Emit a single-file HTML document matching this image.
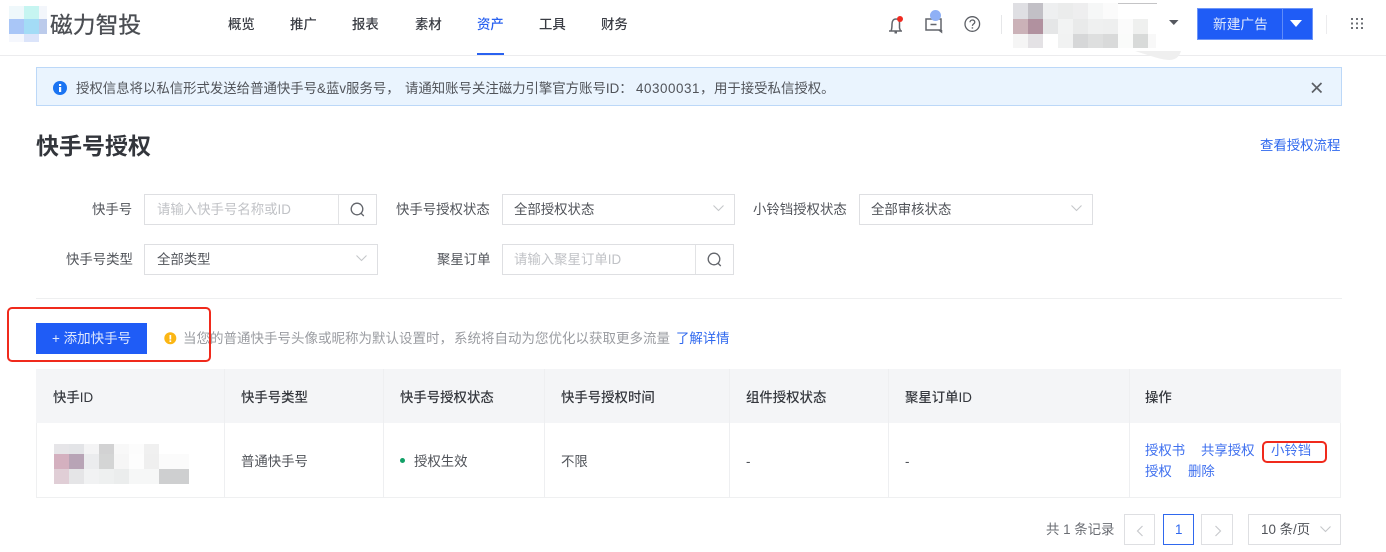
<!DOCTYPE html>
<html lang="zh"><head><meta charset="utf-8"><style>
html,body{margin:0;padding:0}
body{width:1386px;height:552px;background:#fff;position:relative;overflow:hidden;font-family:"Liberation Sans","Noto Sans CJK SC",sans-serif;font-size:13.4px;color:#505359;text-spacing-trim:space-all}
.t{position:absolute;white-space:nowrap;line-height:20px;margin-top:1px}
.b{position:absolute}
.nav{font-weight:500;color:#3a3d44}
.th{font-weight:500;color:#35383e}
.lk{color:#3f70ef}
.box{position:absolute;border:1px solid #dedfe2;box-sizing:border-box;background:#fff}
.ph{color:#c0c2c6}
svg{position:absolute;overflow:visible}
</style></head><body>
<!-- logo mosaic -->
<div class="b" style="left:9px;top:6px;width:15px;height:13px;background:#eff8fb"></div>
<div class="b" style="left:24px;top:6px;width:15px;height:13px;background:#c6f5f1"></div>
<div class="b" style="left:39px;top:6px;width:8px;height:13px;background:#f3f6fb"></div>
<div class="b" style="left:9px;top:19px;width:15px;height:15px;background:#a9c6f7"></div>
<div class="b" style="left:24px;top:19px;width:15px;height:15px;background:#a3dcf6"></div>
<div class="b" style="left:39px;top:19px;width:8px;height:15px;background:#bccbeb"></div>
<div class="b" style="left:9px;top:34px;width:15px;height:8px;background:#f5f7fd"></div>
<div class="b" style="left:24px;top:34px;width:15px;height:8px;background:#dbe4fa"></div>
<div class="t" style="left:50px;top:11px;font-size:22.8px;line-height:26px;color:#4a4d52;-webkit-text-stroke:.3px #4a4d52">磁力智投</div>
<div class="t nav" style="left:228px;top:14px">概览</div>
<div class="t nav" style="left:290px;top:14px">推广</div>
<div class="t nav" style="left:352px;top:14px">报表</div>
<div class="t nav" style="left:415px;top:14px">素材</div>
<div class="t nav" style="left:477px;top:14px;color:#2a62f0">资产</div>
<div class="b" style="left:477px;top:53px;width:27px;height:2px;background:#2a62f0"></div>
<div class="t nav" style="left:539px;top:14px">工具</div>
<div class="t nav" style="left:601px;top:14px">财务</div>
<div class="b" style="left:0;top:55px;width:1386px;height:1px;background:#ececee"></div>
<!-- icons -->
<svg style="left:886px;top:14px" width="20" height="20" viewBox="0 0 20 20" fill="none" stroke="#62656b" stroke-width="1.5"><path d="M3 17h13M5 17c1-2 1-4 1-7 0-3 1.500-5 4-5 2 0 3.500 1 3.500 3v6l1 3"/><path d="M8.500 18.500h2.500" stroke-width="2"/></svg>
<div class="b" style="left:897px;top:16px;width:6px;height:6px;border-radius:50%;background:#f02a20"></div>
<svg style="left:925px;top:9px" width="20" height="24" viewBox="0 0 20 24" fill="none" stroke="#62656b" stroke-width="1.500"><path d="M1 10h15v11H4H1zM5.500 15.500h6"/><path d="M14 21l2.500 2v-2"/></svg>
<div class="b" style="left:930px;top:10px;width:11px;height:11px;border-radius:50%;background:#8fb0f5"></div>
<svg style="left:964px;top:16px" width="17" height="17" viewBox="0 0 17 17" fill="none" stroke="#5c5f65" stroke-width="1.300"><circle cx="8.300" cy="8" r="7.300"/><path d="M6 6.300c0-3 4.800-3 4.800-.2 0 1.800-2.400 1.800-2.400 3.800"/><path d="M8.400 11.300v1.300" stroke-width="1.500"/></svg>
<div class="b" style="left:1001px;top:15px;width:1px;height:19px;background:#e6e7e9"></div>
<!-- account mosaic -->
<div class="b" style="left:1013px;top:3px;width:144px;height:1px;background:#c4c4c6"></div>
<svg style="left:1013px;top:3px" width="150" height="45" shape-rendering="crispEdges">
<rect x="0" y="0" width="15" height="16" fill="#dfdfe3"/><rect x="15" y="0" width="15" height="16" fill="#c2c0c6"/><rect x="30" y="0" width="15" height="16" fill="#eeeff0"/><rect x="45" y="0" width="15" height="16" fill="#ebecec"/><rect x="60" y="0" width="15" height="16" fill="#eeeeef"/><rect x="75" y="0" width="15" height="16" fill="#f6f7f7"/><rect x="90" y="0" width="15" height="16" fill="#fbfbfb"/>
<rect x="0" y="16" width="15" height="15" fill="#cbb2b8"/><rect x="15" y="16" width="15" height="15" fill="#b1919f"/><rect x="30" y="16" width="15" height="15" fill="#e5e6e7"/><rect x="45" y="16" width="15" height="15" fill="#f2f3f3"/><rect x="60" y="16" width="15" height="15" fill="#e9eaea"/><rect x="75" y="16" width="15" height="15" fill="#eff0f0"/><rect x="90" y="16" width="15" height="15" fill="#eeefef"/><rect x="105" y="16" width="15" height="15" fill="#fbfbfb"/><rect x="120" y="16" width="15" height="15" fill="#eff0ef"/>
<rect x="0" y="31" width="15" height="14" fill="#f5f5f5"/><rect x="15" y="31" width="15" height="14" fill="#e4e2e5"/><rect x="45" y="31" width="15" height="14" fill="#f1f2f2"/><rect x="60" y="31" width="15" height="14" fill="#d6d7d8"/><rect x="75" y="31" width="15" height="14" fill="#dedfdf"/><rect x="90" y="31" width="15" height="14" fill="#d9dada"/><rect x="105" y="31" width="15" height="14" fill="#fafbfa"/><rect x="120" y="31" width="15" height="14" fill="#d8dad9"/><rect x="135" y="31" width="8" height="14" fill="#f8f8f8"/>
</svg>
<svg style="left:1135px;top:50px" width="50" height="12"><path d="M0 1h46c-1 3-3 9-12 9-8 0-24-6-34-9z" fill="#efefef"/></svg>
<svg style="left:1169px;top:20px" width="10" height="6"><path d="M0 0h9.500L4.800 5z" fill="#55585f"/></svg>
<!-- new ad button -->
<div class="b" style="left:1197px;top:8px;width:116px;height:32px;background:#1f5cf6;border:1px solid #6d95f7;box-sizing:border-box"></div>
<div class="b" style="left:1282px;top:9px;width:1px;height:30px;background:#5f8cf8"></div>
<div class="t" style="left:1213px;top:14px;color:#dfe8fd;font-size:13.7px">新建广告</div>
<svg style="left:1289px;top:20px" width="14" height="8"><path d="M1 0h12L7 7z" fill="#fff"/></svg>
<div class="b" style="left:1326px;top:15px;width:1px;height:19px;background:#ececee"></div>
<svg style="left:1351px;top:18px" width="13" height="13" fill="#6d7075"><rect x="0" y="0" width="2" height="2"/><rect x="5" y="0" width="2" height="2"/><rect x="10" y="0" width="2" height="2"/><rect x="0" y="4.500" width="2" height="2"/><rect x="5" y="4.500" width="2" height="2"/><rect x="10" y="4.500" width="2" height="2"/><rect x="0" y="9" width="2" height="2"/><rect x="5" y="9" width="2" height="2"/><rect x="10" y="9" width="2" height="2"/></svg>
<!-- alert -->
<div class="b" style="left:36px;top:67px;width:1306px;height:39px;background:#eaf4fe;border:1px solid #bcd8f8;box-sizing:border-box"></div>
<svg style="left:53px;top:81px" width="14" height="14"><circle cx="7" cy="7" r="7" fill="#1b74f2"/><rect x="6" y="6" width="2.200" height="5" fill="#fff"/><rect x="6" y="3" width="2.200" height="2" fill="#fff"/></svg>
<div class="t" style="left:76px;top:78px">授权信息将以私信形式发送给普通快手号&amp;蓝v服务号，</div>
<div class="t" style="left:405px;top:78px">请通知账号关注磁力引擎官方账号ID：</div>
<div class="t" style="left:636px;top:78px;letter-spacing:.55px">40300031，</div>
<div class="t" style="left:714px;top:78px">用于接受私信授权。</div>
<svg style="left:1311px;top:82px" width="12" height="12" fill="none" stroke="#5c5f65" stroke-width="1.700"><path d="M1 1l9.500 9.500M10.500 1L1 10.500"/></svg>
<!-- title -->
<div class="t" style="left:36px;top:130px;font-size:23px;line-height:30px;font-weight:700;color:#33363c">快手号授权</div>
<div class="t lk" style="left:1260px;top:135px;color:#2f68ee">查看授权流程</div>
<!-- filters -->
<div class="t" style="left:92px;top:199px">快手号</div>
<div class="box" style="left:144px;top:194px;width:233px;height:31px"></div>
<div class="b" style="left:338px;top:195px;width:1px;height:29px;background:#e2e3e5"></div>
<div class="t ph" style="left:157px;top:199px">请输入快手号名称或ID</div>
<svg style="left:350px;top:202px" width="15" height="15" fill="none" stroke="#62656b" stroke-width="1.300"><circle cx="7" cy="7" r="5.800"/><path d="M10.800 11l3 3"/></svg>
<div class="t" style="left:396px;top:199px">快手号授权状态</div>
<div class="box" style="left:502px;top:194px;width:233px;height:31px"></div>
<div class="t" style="left:514px;top:199px">全部授权状态</div>
<svg style="left:713px;top:205px" width="11" height="7" fill="none" stroke="#c5c7ca" stroke-width="1.100"><path d="M.5.500l5 5 5-5"/></svg>
<div class="t" style="left:753px;top:199px">小铃铛授权状态</div>
<div class="box" style="left:859px;top:194px;width:234px;height:31px"></div>
<div class="t" style="left:871px;top:199px">全部审核状态</div>
<svg style="left:1071px;top:205px" width="11" height="7" fill="none" stroke="#c5c7ca" stroke-width="1.100"><path d="M.5.500l5 5 5-5"/></svg>
<div class="t" style="left:66px;top:249px">快手号类型</div>
<div class="box" style="left:144px;top:244px;width:234px;height:31px"></div>
<div class="t" style="left:157px;top:249px">全部类型</div>
<svg style="left:356px;top:255px" width="11" height="7" fill="none" stroke="#c5c7ca" stroke-width="1.100"><path d="M.5.500l5 5 5-5"/></svg>
<div class="t" style="left:437px;top:249px">聚星订单</div>
<div class="box" style="left:502px;top:244px;width:232px;height:31px"></div>
<div class="b" style="left:695px;top:245px;width:1px;height:29px;background:#e2e3e5"></div>
<div class="t ph" style="left:514px;top:249px">请输入聚星订单ID</div>
<svg style="left:707px;top:252px" width="15" height="15" fill="none" stroke="#62656b" stroke-width="1.300"><circle cx="7" cy="7" r="5.800"/><path d="M10.800 11l3 3"/></svg>
<div class="b" style="left:36px;top:298px;width:1306px;height:1px;background:#eeeff0"></div>
<!-- add -->
<div class="b" style="left:36px;top:323px;width:111px;height:31px;background:#1f5cf6"></div>
<div class="t" style="left:52px;top:328px;color:#dfe8fd;font-size:13.5px">+ 添加快手号</div>
<svg style="left:164px;top:332px" width="13" height="13"><circle cx="6.300" cy="6.300" r="6" fill="#fbb614"/><rect x="5.500" y="3" width="1.700" height="4.500" fill="#fff"/><rect x="5.500" y="8.300" width="1.700" height="1.700" fill="#fff"/></svg>
<div class="t" style="left:183px;top:328px;color:#9a9ca1;font-size:13.5px">当您的普通快手号头像或昵称为默认设置时，</div>
<div class="t" style="left:454px;top:328px;color:#9a9ca1;font-size:13.5px">系统将自动为您优化以获取更多流量</div>
<div class="t" style="left:676px;top:328px;color:#2f68ee">了解详情</div>
<div class="b" style="left:7px;top:307px;width:204px;height:55px;border:2px solid #f02a1c;border-radius:5px;box-sizing:border-box"></div>
<!-- table -->
<div class="b" style="left:36px;top:369px;width:1305px;height:54px;background:#f4f5f7"></div>
<div class="b" style="left:36px;top:423px;width:1px;height:75px;background:#eff0f1"></div>
<div class="b" style="left:1340px;top:423px;width:1px;height:75px;background:#eff0f1"></div>
<div class="b" style="left:36px;top:497px;width:1305px;height:1px;background:#eff0f1"></div>
<div class="b" style="left:224px;top:369px;width:1px;height:129px;background:#eeeff1"></div>
<div class="b" style="left:383px;top:369px;width:1px;height:129px;background:#eeeff1"></div>
<div class="b" style="left:544px;top:369px;width:1px;height:129px;background:#eeeff1"></div>
<div class="b" style="left:729px;top:369px;width:1px;height:129px;background:#eeeff1"></div>
<div class="b" style="left:888px;top:369px;width:1px;height:129px;background:#eeeff1"></div>
<div class="b" style="left:1129px;top:369px;width:1px;height:129px;background:#eeeff1"></div>
<div class="t th" style="left:53px;top:387px">快手ID</div>
<div class="t th" style="left:241px;top:387px">快手号类型</div>
<div class="t th" style="left:400px;top:387px">快手号授权状态</div>
<div class="t th" style="left:561px;top:387px">快手号授权时间</div>
<div class="t th" style="left:746px;top:387px">组件授权状态</div>
<div class="t th" style="left:905px;top:387px">聚星订单ID</div>
<div class="t th" style="left:1145px;top:387px">操作</div>
<svg style="left:54px;top:444px" width="135" height="40" shape-rendering="crispEdges">
<rect x="0" y="0" width="15" height="10" fill="#e6e5e8"/><rect x="15" y="0" width="15" height="10" fill="#e3e4e7"/><rect x="30" y="0" width="15" height="10" fill="#f4f4f5"/><rect x="45" y="0" width="15" height="10" fill="#d2d2d3"/><rect x="60" y="0" width="15" height="10" fill="#f8f8f8"/><rect x="75" y="0" width="15" height="10" fill="#fcfcfc"/><rect x="90" y="0" width="15" height="10" fill="#f0f0f0"/>
<rect x="0" y="10" width="15" height="15" fill="#d4b0bf"/><rect x="15" y="10" width="15" height="15" fill="#b8a4b6"/><rect x="30" y="10" width="15" height="15" fill="#ebecee"/><rect x="45" y="10" width="15" height="15" fill="#d4d5d5"/><rect x="60" y="10" width="15" height="15" fill="#f6f6f6"/><rect x="75" y="10" width="15" height="15" fill="#fdfdfd"/><rect x="90" y="10" width="15" height="15" fill="#efefef"/><rect x="105" y="10" width="30" height="15" fill="#fbfbfb"/>
<rect x="0" y="25" width="15" height="15" fill="#e0ced6"/><rect x="15" y="25" width="15" height="15" fill="#e5e5e7"/><rect x="30" y="25" width="15" height="15" fill="#f1f2f3"/><rect x="45" y="25" width="15" height="15" fill="#eef0f0"/><rect x="60" y="25" width="15" height="15" fill="#ebeded"/><rect x="75" y="25" width="30" height="15" fill="#f6f7f7"/><rect x="105" y="25" width="30" height="15" fill="#cecfd0"/>
</svg>
<div class="t" style="left:241px;top:451px">普通快手号</div>
<div class="b" style="left:400px;top:458px;width:5px;height:5px;border-radius:50%;background:#12a067"></div>
<div class="t" style="left:414px;top:451px">授权生效</div>
<div class="t" style="left:561px;top:451px">不限</div>
<div class="t" style="left:746px;top:451px">-</div>
<div class="t" style="left:905px;top:451px">-</div>
<div class="t lk" style="left:1145px;top:440px">授权书</div>
<div class="t lk" style="left:1201px;top:440px">共享授权</div>
<div class="t lk" style="left:1271px;top:440px">小铃铛</div>
<div class="t lk" style="left:1145px;top:461px">授权</div>
<div class="t lk" style="left:1188px;top:461px">删除</div>
<div class="b" style="left:1262px;top:441px;width:65px;height:22px;border:2px solid #f02a1c;border-radius:5px;box-sizing:border-box"></div>
<!-- pagination -->
<div class="t" style="left:1046px;top:519px;color:#6a6d73">共 1 条记录</div>
<div class="box" style="left:1124px;top:514px;width:31px;height:31px"></div>
<svg style="left:1136px;top:525px" width="8" height="12" fill="none" stroke="#c8cacd" stroke-width="1.200"><path d="M6.500 1L1.500 6l5 5"/></svg>
<div class="box" style="left:1163px;top:514px;width:31px;height:31px;border-color:#2f68ee"></div>
<div class="t" style="left:1175px;top:519px;color:#2f68ee">1</div>
<div class="box" style="left:1201px;top:514px;width:32px;height:31px"></div>
<svg style="left:1214px;top:525px" width="8" height="12" fill="none" stroke="#c8cacd" stroke-width="1.200"><path d="M1.500 1l5 5-5 5"/></svg>
<div class="box" style="left:1248px;top:514px;width:93px;height:31px"></div>
<div class="t" style="left:1261px;top:519px">10 条/页</div>
<svg style="left:1320px;top:526px" width="11" height="7" fill="none" stroke="#c5c7ca" stroke-width="1.100"><path d="M.5.500l5 5 5-5"/></svg>
</body></html>
